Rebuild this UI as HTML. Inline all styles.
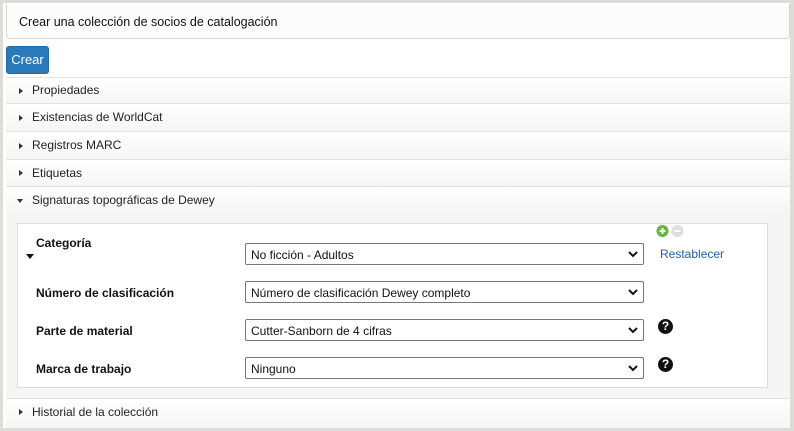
<!DOCTYPE html>
<html><head><style>
*{box-sizing:border-box;margin:0;padding:0}
body{width:794px;height:431px;background:#dcdcd8;font-family:"Liberation Sans",Arial,sans-serif;font-size:12px;color:#222;position:relative;overflow:hidden}
.page{position:absolute;left:3px;top:3px;width:787px;height:425px;background:#fff}
.hdr{position:absolute;left:3px;top:1px;width:784px;height:35px;background:#fcfcfc;border:1px solid #d4d4d4;border-top:none;border-radius:0 0 4px 4px;padding:11px 12px;font-size:12.5px;color:#111}
.btn{position:absolute;left:3px;top:43px;width:43px;height:28px;background:#2a7ab9;border:1px solid #1f6aa5;border-radius:3px;color:#fff;font-size:13px;line-height:26px;text-align:center}
.row{position:absolute;left:3px;width:784px;background:linear-gradient(#fff,#f5f5f5);border-top:1px solid #e2e2e2;padding-left:26px;font-size:12px;color:#222}
.tri{position:absolute;left:13px;top:50%;margin-top:-3px;width:0;height:0;border-top:3px solid transparent;border-bottom:3px solid transparent;border-left:4px solid #333}
.trid{position:absolute;left:11px;top:50%;margin-top:-1px;width:0;height:0;border-left:3.5px solid transparent;border-right:3.5px solid transparent;border-top:4px solid #333}
.inner{position:absolute;left:14px;top:220px;width:751px;height:165px;border:1px solid #ddd;background:#fff}
.lbl{position:absolute;left:33px;font-weight:bold;font-size:12px;color:#111}
.sel{position:absolute;left:242px;width:399px;height:22px;border:1px solid #777;border-radius:2px;padding:4px 5px;font-size:12px;color:#111;background:#fff}
.sel svg{position:absolute;right:5px;top:7px}
.q{position:absolute;left:655px;width:15px;height:15px;border-radius:50%;background:#111;color:#fff;font-weight:bold;font-size:12px;line-height:15px;text-align:center}
</style></head><body>
<div class="page">
<div class="hdr">Crear una colección de socios de catalogación</div>
<div class="btn">Crear</div>
<div class="row" style="top:74px;height:26px;line-height:25px"><span class="tri"></span>Propiedades</div>
<div class="row" style="top:100px;height:28px;line-height:27px"><span class="tri"></span>Existencias de WorldCat</div>
<div class="row" style="top:128px;height:28px;line-height:27px"><span class="tri"></span>Registros MARC</div>
<div class="row" style="top:156px;height:27px;line-height:26px"><span class="tri"></span>Etiquetas</div>
<div class="row" style="top:183px;height:27px;line-height:26px"><span class="trid"></span>Signaturas topográficas de Dewey</div>
<div style="position:absolute;left:3px;top:210px;width:784px;height:185px;background:#f5f5f5"></div>
<div class="inner"></div>
<div style="position:absolute;left:23px;top:251px;width:0;height:0;border-left:4px solid transparent;border-right:4px solid transparent;border-top:5px solid #111"></div>
<div class="lbl" style="top:233px">Categoría</div>
<div class="lbl" style="top:283px">Número de clasificación</div>
<div class="lbl" style="top:321px">Parte de material</div>
<div class="lbl" style="top:359px">Marca de trabajo</div>
<div class="sel" style="top:240px">No ficción - Adultos<svg width="10" height="7" viewBox="0 0 10 7"><path d="M1 1l4 4 4-4" fill="none" stroke="#111" stroke-width="2"/></svg></div>
<div class="sel" style="top:278px">Número de clasificación Dewey completo<svg width="10" height="7" viewBox="0 0 10 7"><path d="M1 1l4 4 4-4" fill="none" stroke="#111" stroke-width="2"/></svg></div>
<div class="sel" style="top:316px">Cutter-Sanborn de 4 cifras<svg width="10" height="7" viewBox="0 0 10 7"><path d="M1 1l4 4 4-4" fill="none" stroke="#111" stroke-width="2"/></svg></div>
<div class="sel" style="top:354px">Ninguno<svg width="10" height="7" viewBox="0 0 10 7"><path d="M1 1l4 4 4-4" fill="none" stroke="#111" stroke-width="2"/></svg></div>
<svg style="position:absolute;left:653px;top:221px" width="32" height="14"><circle cx="6.5" cy="7" r="6" fill="#6ab33c"/><path d="M6.5 4v6M3.5 7h6" stroke="#fff" stroke-width="2"/><circle cx="21.5" cy="7" r="6" fill="#ddd"/><path d="M18.5 7h6" stroke="#fff" stroke-width="2"/></svg>
<div style="position:absolute;left:657px;top:244px;color:#1f5fa8;font-size:12px">Restablecer</div>
<div class="q" style="top:316px">?</div>
<div class="q" style="top:354px">?</div>
<div class="row" style="top:395px;height:30px;line-height:26px"><span class="tri" style="margin-top:-5px"></span>Historial de la colección</div>
</div>
</body></html>
